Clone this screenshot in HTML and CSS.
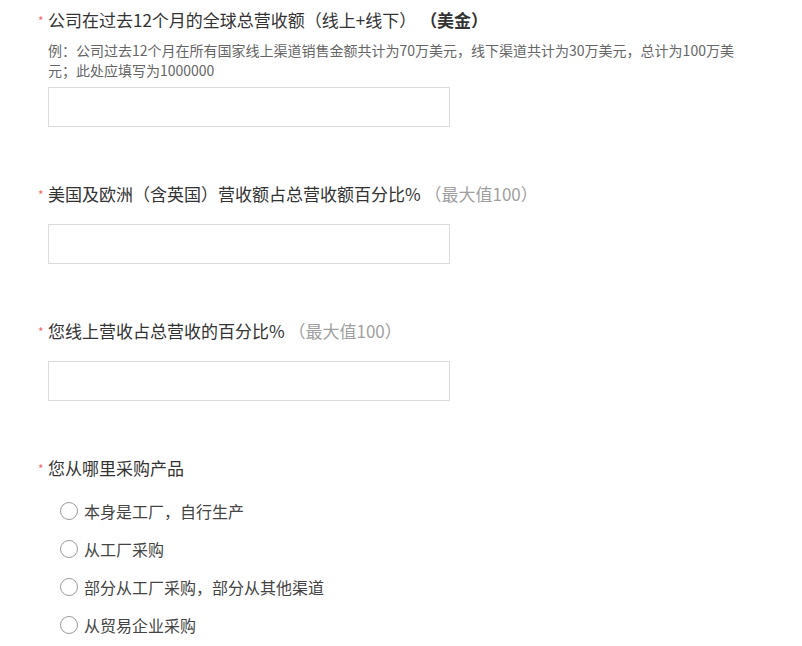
FILE: index.html
```html
<!DOCTYPE html>
<html lang="zh-CN">
<head>
<meta charset="utf-8">
<link rel="stylesheet" href="styles.css">
</head>
<body>
<form class="form">
  <div class="field">
    <div class="label"><span class="req">*</span>公司在过去12个月的全球总营收额（线上+线下） <b class="strong">（美金）</b></div>
    <div class="hint">例：公司过去12个月在所有国家线上渠道销售金额共计为70万美元，线下渠道共计为30万美元，总计为100万美元；此处应填写为1000000</div>
    <input class="input input-after-hint" type="text">
  </div>
  <div class="field">
    <div class="label"><span class="req">*</span>美国及欧洲（含英国）营收额占总营收额百分比% <span class="muted">（最大值100）</span></div>
    <input class="input" type="text">
  </div>
  <div class="field">
    <div class="label"><span class="req">*</span>您线上营收占总营收的百分比% <span class="muted">（最大值100）</span></div>
    <input class="input" type="text">
  </div>
  <div class="field field-last">
    <div class="label"><span class="req">*</span>您从哪里采购产品</div>
    <div class="radios">
      <label class="radio"><span class="circle"></span>本身是工厂，自行生产</label>
      <label class="radio"><span class="circle"></span>从工厂采购</label>
      <label class="radio"><span class="circle"></span>部分从工厂采购，部分从其他渠道</label>
      <label class="radio"><span class="circle"></span>从贸易企业采购</label>
    </div>
  </div>
</form>
</body>
</html>
```
FILE: styles.css
```css
* { box-sizing: border-box; }
html, body { margin: 0; padding: 0; background: #fff; }
body {
  font-family: "Microsoft YaHei", "Noto Sans CJK SC", "Noto Sans", sans-serif;
  color: #333;
}
.form {
  padding: 8px 0 0 38px;
}
.field {
  margin-bottom: 55px;
}
.field-last { margin-bottom: 0; }
.label {
  font-size: 17px;
  line-height: 24px;
  color: #333;
  white-space: nowrap;
}
.req {
  display: inline-block;
  width: 10px;
  color: #f26d6d;
  font-size: 12px;
  line-height: 12px;
  vertical-align: 1px;
}
.strong { font-weight: bold; }
.muted { color: #a0a0a0; }
.hint {
  margin: 8px 0 0 10px;
  width: 696px;
  font-size: 14px;
  line-height: 20px;
  color: #666;
}
.input {
  display: block;
  margin: 18px 0 0 10px;
  width: 402px;
  height: 40px;
  border: 1px solid #dcdcdc;
  border-radius: 0;
  background: #fff;
  outline: none;
  padding: 0 10px;
  font-size: 14px;
}
.input-after-hint { margin-top: 7px; }
.radios {
  margin: 12px 0 0 22px;
}
.radio {
  display: flex;
  align-items: center;
  height: 38px;
  font-size: 16px;
  color: #444;
}
.circle {
  width: 18px;
  height: 18px;
  border: 1px solid #9a9a9a;
  border-radius: 50%;
  margin-right: 6px;
  flex: none;
}
```
